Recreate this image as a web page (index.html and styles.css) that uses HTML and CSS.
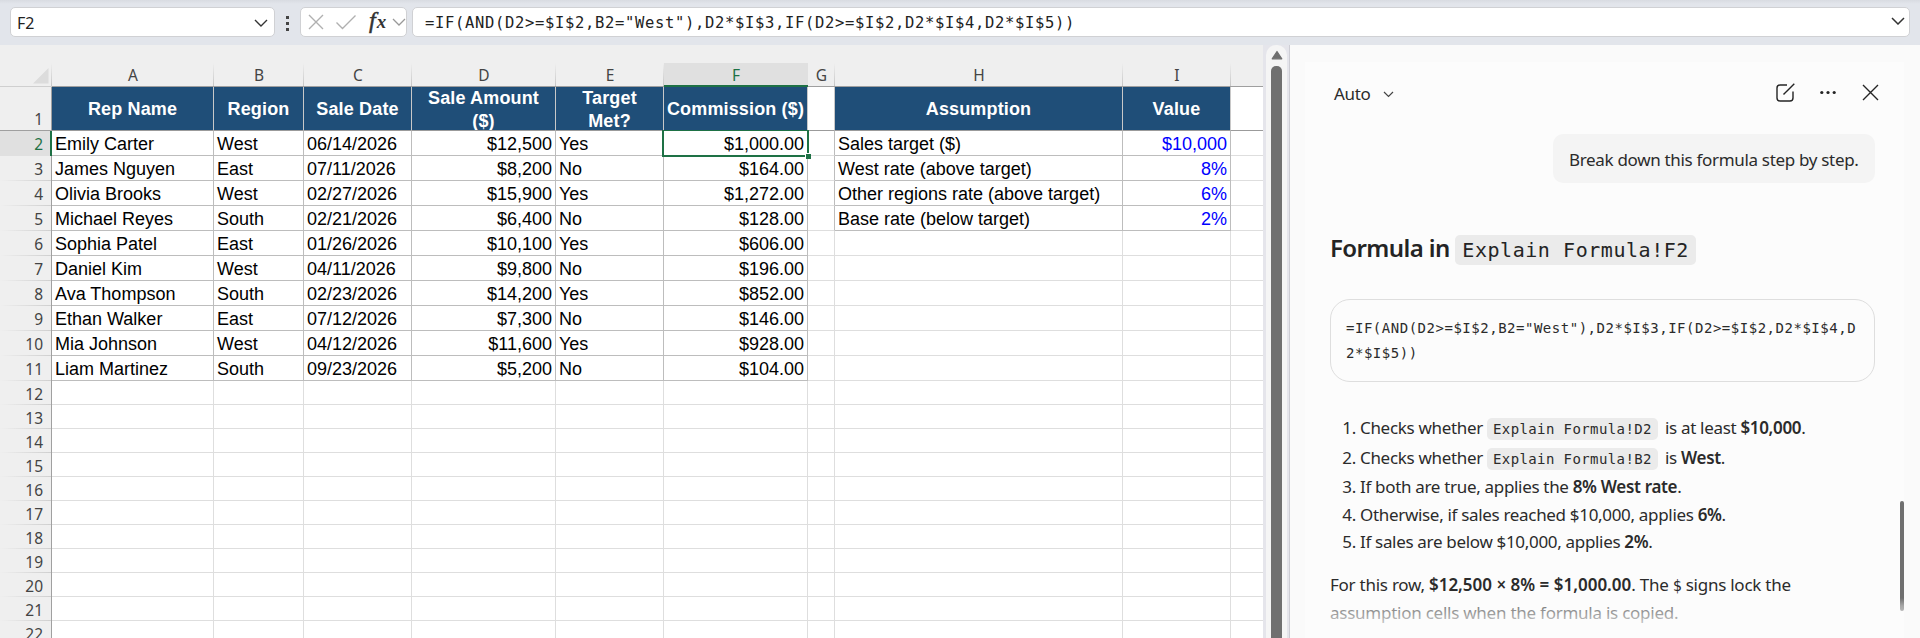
FILE: index.html
```html
<!DOCTYPE html>
<html lang="en">
<head>
  <meta charset="UTF-8">
  <meta name="viewport" content="width=device-width, initial-scale=1.0">
  <title>Explain Formula</title>
  <link rel="stylesheet" href="styles.css">
</head>
<body>

  <div class="formula-bar">
    <div class="name-box">
      <span>F2</span>
      <svg width="14" height="8" viewBox="0 0 14 8"><path d="M1 1l6 6 6-6" fill="none" stroke="#333" stroke-width="1.4"/></svg>
    </div>
    <div class="grip"><i></i><i></i><i></i></div>
    <div class="fx-box">
      <svg width="16" height="16" viewBox="0 0 16 16"><path d="M1 1l14 14M15 1L1 15" fill="none" stroke="#b0b0b0" stroke-width="1.4"/></svg>
      <svg class="check" width="22" height="16" viewBox="0 0 22 16"><path d="M1.500 8.500l6 6L20.500 1.500" fill="none" stroke="#b0b0b0" stroke-width="1.4"/></svg>
      <span class="fx">f<span>x</span></span>
      <svg class="fx-arrow" width="14" height="8" viewBox="0 0 14 8"><path d="M1 1l6 6 6-6" fill="none" stroke="#999" stroke-width="1.3"/></svg>
    </div>
    <div class="formula-input">
      <span>=IF(AND(D2&gt;=$I$2,B2="West"),D2*$I$3,IF(D2&gt;=$I$2,D2*$I$4,D2*$I$5))</span>
      <svg width="14" height="8" viewBox="0 0 14 8"><path d="M1 1l6 6 6-6" fill="none" stroke="#333" stroke-width="1.5"/></svg>
    </div>
  </div>

  <div class="main">
    <div class="sheet">
      <table>
        <colgroup>
          <col class="w-num"><col class="w-a"><col class="w-b"><col class="w-c"><col class="w-d"><col class="w-c"><col class="w-d"><col class="w-g"><col class="w-h"><col class="w-c"><col class="w-rest">
        </colgroup>
        <tr class="letters">
          <th class="corner"><svg width="16" height="16" viewBox="0 0 16 16"><path d="M15.500 0v15.500H0z" fill="#dcdcdc"/></svg></th>
          <th>A</th><th>B</th><th>C</th><th>D</th><th>E</th><th class="active">F</th><th>G</th><th>H</th><th>I</th><th></th>
        </tr>
        <tr class="titles">
          <th>1</th>
          <td class="fill"><div>Rep Name</div></td>
          <td class="fill"><div>Region</div></td>
          <td class="fill"><div>Sale Date</div></td>
          <td class="fill"><div>Sale Amount<br>($)</div></td>
          <td class="fill"><div>Target<br>Met?</div></td>
          <td class="fill"><div>Commission ($)</div></td>
          <td></td>
          <td class="fill"><div>Assumption</div></td>
          <td class="fill"><div>Value</div></td>
          <td></td>
        </tr>
        <tr class="data active-row"><th>2</th><td>Emily Carter</td><td>West</td><td>06/14/2026</td><td class="num">$12,500</td><td>Yes</td><td class="num selected">$1,000.00</td><td class="gap"></td><td>Sales target ($)</td><td class="num input">$10,000</td><td class="rest"></td></tr>
        <tr class="data"><th>3</th><td>James Nguyen</td><td>East</td><td>07/11/2026</td><td class="num">$8,200</td><td>No</td><td class="num">$164.00</td><td class="gap"></td><td>West rate (above target)</td><td class="num input">8%</td><td class="rest"></td></tr>
        <tr class="data"><th>4</th><td>Olivia Brooks</td><td>West</td><td>02/27/2026</td><td class="num">$15,900</td><td>Yes</td><td class="num">$1,272.00</td><td class="gap"></td><td>Other regions rate (above target)</td><td class="num input">6%</td><td class="rest"></td></tr>
        <tr class="data"><th>5</th><td>Michael Reyes</td><td>South</td><td>02/21/2026</td><td class="num">$6,400</td><td>No</td><td class="num">$128.00</td><td class="gap"></td><td>Base rate (below target)</td><td class="num input">2%</td><td class="rest"></td></tr>
        <tr class="data"><th>6</th><td>Sophia Patel</td><td>East</td><td>01/26/2026</td><td class="num">$10,100</td><td>Yes</td><td class="num">$606.00</td><td class="rest"></td><td class="rest"></td><td class="rest"></td><td class="rest"></td></tr>
        <tr class="data"><th>7</th><td>Daniel Kim</td><td>West</td><td>04/11/2026</td><td class="num">$9,800</td><td>No</td><td class="num">$196.00</td><td class="rest"></td><td class="rest"></td><td class="rest"></td><td class="rest"></td></tr>
        <tr class="data"><th>8</th><td>Ava Thompson</td><td>South</td><td>02/23/2026</td><td class="num">$14,200</td><td>Yes</td><td class="num">$852.00</td><td class="rest"></td><td class="rest"></td><td class="rest"></td><td class="rest"></td></tr>
        <tr class="data"><th>9</th><td>Ethan Walker</td><td>East</td><td>07/12/2026</td><td class="num">$7,300</td><td>No</td><td class="num">$146.00</td><td class="rest"></td><td class="rest"></td><td class="rest"></td><td class="rest"></td></tr>
        <tr class="data"><th>10</th><td>Mia Johnson</td><td>West</td><td>04/12/2026</td><td class="num">$11,600</td><td>Yes</td><td class="num">$928.00</td><td class="rest"></td><td class="rest"></td><td class="rest"></td><td class="rest"></td></tr>
        <tr class="data"><th>11</th><td>Liam Martinez</td><td>South</td><td>09/23/2026</td><td class="num">$5,200</td><td>No</td><td class="num">$104.00</td><td class="rest"></td><td class="rest"></td><td class="rest"></td><td class="rest"></td></tr>
        <tr><th>12</th><td></td><td></td><td></td><td></td><td></td><td></td><td></td><td></td><td></td><td></td></tr>
        <tr><th>13</th><td></td><td></td><td></td><td></td><td></td><td></td><td></td><td></td><td></td><td></td></tr>
        <tr><th>14</th><td></td><td></td><td></td><td></td><td></td><td></td><td></td><td></td><td></td><td></td></tr>
        <tr><th>15</th><td></td><td></td><td></td><td></td><td></td><td></td><td></td><td></td><td></td><td></td></tr>
        <tr><th>16</th><td></td><td></td><td></td><td></td><td></td><td></td><td></td><td></td><td></td><td></td></tr>
        <tr><th>17</th><td></td><td></td><td></td><td></td><td></td><td></td><td></td><td></td><td></td><td></td></tr>
        <tr><th>18</th><td></td><td></td><td></td><td></td><td></td><td></td><td></td><td></td><td></td><td></td></tr>
        <tr><th>19</th><td></td><td></td><td></td><td></td><td></td><td></td><td></td><td></td><td></td><td></td></tr>
        <tr><th>20</th><td></td><td></td><td></td><td></td><td></td><td></td><td></td><td></td><td></td><td></td></tr>
        <tr><th>21</th><td></td><td></td><td></td><td></td><td></td><td></td><td></td><td></td><td></td><td></td></tr>
        <tr><th>22</th><td></td><td></td><td></td><td></td><td></td><td></td><td></td><td></td><td></td><td></td></tr>
      </table>
    </div>

    <div class="scrollbar">
      <div class="track">
        <svg width="12" height="10" viewBox="0 0 12 10"><path d="M6 1.500L10.800 8.800H1.200z" fill="#6f6f6f" stroke="#6f6f6f" stroke-width="1.200" stroke-linejoin="round"/></svg>
        <div class="thumb"></div>
      </div>
    </div>

    <div class="panel">
      <div class="chat">
        <div class="chat-header">
          <span class="mode">Auto</span>
          <svg class="mode-arrow" width="11" height="7" viewBox="0 0 11 7"><path d="M1 1l4.500 4.500L10 1" fill="none" stroke="#444" stroke-width="1.200"/></svg>
          <div class="actions">
            <svg width="20" height="20" viewBox="0 0 20 20"><path d="M12 2H5a3 3 0 0 0-3 3v10a3 3 0 0 0 3 3h10a3 3 0 0 0 3-3V8.500M8.500 11.500L19.300 0.700" fill="none" stroke="#242424" stroke-width="1.400"/></svg>
            <svg width="18" height="20" viewBox="0 0 18 20"><circle cx="2.800" cy="9.500" r="1.600" fill="#242424"/><circle cx="9" cy="9.500" r="1.600" fill="#242424"/><circle cx="15.200" cy="9.500" r="1.600" fill="#242424"/></svg>
            <svg width="18" height="20" viewBox="0 0 18 20"><path d="M2 2l15 15M17 2L2 17" fill="none" stroke="#242424" stroke-width="1.400"/></svg>
          </div>
        </div>

        <div class="bubble">Break down this formula step by step.</div>

        <h2>Formula in <code>Explain Formula!F2</code></h2>

        <div class="code-block">=IF(AND(D2&gt;=$I$2,B2="West"),D2*$I$3,IF(D2&gt;=$I$2,D2*$I$4,D2*$I$5))</div>

        <ol>
          <li class="tall">Checks whether <code>Explain Formula!D2</code> is at least <b>$10,000</b>.</li>
          <li class="tall">Checks whether <code>Explain Formula!B2</code> is <b>West</b>.</li>
          <li>If both are true, applies the <b>8% West rate</b>.</li>
          <li>Otherwise, if sales reached $10,000, applies <b>6%</b>.</li>
          <li>If sales are below $10,000, applies <b>2%</b>.</li>
        </ol>

        <p>For this row, <b>$12,500 × 8% = $1,000.00</b>. The <span class="mono">$</span> signs lock the<br>assumption cells when the formula is copied.</p>

        <div class="chat-thumb"></div>
        <div class="fade"></div>
      </div>
    </div>
  </div>

</body>
</html>
```
FILE: styles.css
```css
/* Basic styling */
*,
*::before,
*::after {
  box-sizing: border-box;
}

body {
  margin: 0;
  height: 638px;
  overflow: hidden;
  display: flex;
  flex-direction: column;
  background: #e2e5eb;
  font-family: "Noto Sans", "Open Sans", sans-serif;
}

svg {
  display: block;
  flex: none;
}

/* Formula bar */
.formula-bar {
  height: 45px;
  flex: none;
  display: flex;
  padding: 7px 10px 8px;
  background: linear-gradient(#d8dbe1, #e2e5eb 4px);
}

.name-box,
.fx-box,
.formula-input {
  display: flex;
  align-items: center;
  height: 30px;
  background: #fff;
  border: 1px solid #d0d1d4;
  border-radius: 5px;
}

.name-box {
  width: 265px;
  padding: 1px 6px 0;
  justify-content: space-between;
  font-size: 16px;
  color: #222;
}

.grip {
  width: 25px;
  display: flex;
  flex-direction: column;
  align-items: center;
  gap: 3px;
  padding-top: 9px;
}

.grip i {
  width: 3px;
  height: 3px;
  background: #444;
}

.fx-box {
  width: 107px;
  padding-left: 7px;
}

.check {
  margin-left: 11px;
}

.fx {
  width: 27px;
  margin: -3px 0 0 12px;
  font-family: "Liberation Serif", serif;
  font-style: italic;
  font-size: 24px;
  line-height: 24px;
  color: #333;
  -webkit-text-stroke: 0.5px #333;
}

.fx span {
  margin-left: 1px;
  font-size: 19px;
  font-weight: bold;
  -webkit-text-stroke: 0;
}

.fx-arrow {
  margin-left: -4px;
}

.formula-input {
  width: 1498px;
  margin-left: 5px;
  padding: 2px 4px 0 12px;
  justify-content: space-between;
  font-family: "DejaVu Sans Mono", monospace;
  font-size: 15.5px;
  letter-spacing: 0.67px;
  color: #222;
}

.formula-input svg {
  margin-top: -5px;
}

.main {
  flex: 1;
  min-height: 0;
  display: flex;
}

/* Spreadsheet */
.sheet {
  width: 1263px;
  overflow: hidden;
  background: #fff;
}

table {
  width: 1263px;
  table-layout: fixed;
  border-collapse: separate;
  border-spacing: 0;
}

.w-num { width: 52px; }
.w-a { width: 162px; }
.w-b { width: 90px; }
.w-c { width: 108px; }
.w-d { width: 144px; }
.w-g { width: 27px; }
.w-h { width: 288px; }
.w-rest { width: 32px; }

th {
  height: 24px;
  padding: 1px 8px 0 0;
  font-weight: normal;
  font-size: 15.5px;
  line-height: 22px;
  text-align: right;
  color: #444;
  border-right: 1px solid #a0a0a0;
  background: linear-gradient(90deg, #efefef, #cfcfcf) bottom / 100% 1px no-repeat #efefef;
}

td {
  height: 24px;
  padding: 0;
  border-right: 1px solid #dedede;
  border-bottom: 1px solid #dedede;
}

tr > :last-child {
  border-right: none;
}

.letters th {
  height: 42px;
  padding: 19px 0 0;
  line-height: 20px;
  text-align: center;
  border-right: none;
  border-bottom: 1px solid #9f9f9f;
  background: linear-gradient(#efefef 18px, #c6c6c6) right / 1px 100% no-repeat #efefef;
}

.letters th:last-child {
  background: #efefef;
}

.letters .corner {
  padding: 20px 0 0 33px;
  border-bottom-color: #cfcfcf;
}

.letters .active {
  color: #1e7145;
  border-bottom: 2px solid #1e7145;
  background: linear-gradient(#efefef 18px, #e0e0e0 18px);
}

.titles th {
  height: 44px;
  padding-top: 21px;
  border-bottom: 1px solid #9f9f9f;
  background: #efefef;
}

.titles td {
  height: 44px;
  border-right-color: #c8c8c8;
  border-bottom-color: #9b9b9b;
}

.fill {
  background: #1f4e78;
}

.fill div {
  height: 43px;
  display: flex;
  align-items: center;
  justify-content: center;
  padding: 2px 0 0;
  text-align: center;
  overflow: hidden;
  font-family: "Liberation Sans", Arial, sans-serif;
  font-size: 18px;
  font-weight: bold;
  line-height: 23px;
  letter-spacing: 0.15px;
  white-space: nowrap;
  color: #fff;
}

.data th,
.data td {
  height: 25px;
}

.data td {
  padding: 2px 3px 0;
  font-family: "Liberation Sans", Arial, sans-serif;
  font-size: 18px;
  line-height: 22px;
  white-space: nowrap;
  color: #000;
  border-color: #bdbdbd;
}

.data .num {
  text-align: right;
}

.data .input {
  color: #0000ff;
}

.data .gap {
  border-bottom-color: #dedede;
}

.data .rest {
  border-color: #dedede;
}

.active-row th {
  color: #1e7145;
  border-right: 2px solid #1e7145;
  padding-right: 7px;
  background: #e0e0e0;
}

.selected {
  position: relative;
}

/* Selection frame and fill handle */
.selected::before {
  content: "";
  position: absolute;
  top: -1px;
  left: -2px;
  width: 147px;
  height: 27px;
  border: 2px solid #1e7145;
  border-top-width: 1px;
}

.selected::after {
  content: "";
  position: absolute;
  right: -4px;
  bottom: -4px;
  width: 6px;
  height: 6px;
  background: #1e7145;
  border: solid #fff;
  border-width: 1px 0 0 1px;
}

/* Sheet scrollbar */
.scrollbar {
  width: 27px;
  padding-left: 3px;
  background: #e5e5eb;
  border-right: 1px solid #cdcdd4;
}

.track {
  width: 21px;
  height: 100%;
  display: flex;
  flex-direction: column;
  align-items: center;
  padding-top: 5px;
  background: #f5f5f5;
  border-radius: 10px 10px 0 0;
}

.thumb {
  width: 11px;
  flex: 1;
  margin-top: 6px;
  background: #707070;
  border-radius: 5px 5px 0 0;
}

/* Chat panel */
.panel {
  flex: 1;
  padding: 17px 16px 0 15px;
  background: #fafafa;
}

.chat {
  position: relative;
  height: 100%;
  padding: 0 29px 0 25px;
  background: #fcfcfc;
  font-size: 17px;
  letter-spacing: -0.32px;
  color: #2b2b2b;
}

.chat-header {
  height: 72px;
  display: flex;
  align-items: flex-start;
  padding: 19px 0 0 4px;
}

.mode {
  line-height: 26px;
}

.mode-arrow {
  margin: 10px 0 0 12px;
}

.actions {
  display: flex;
  gap: 24px;
  margin: 2px -4px 0 auto;
}

.bubble {
  width: 322px;
  height: 49px;
  margin-left: auto;
  padding: 0 16px;
  border-radius: 10px;
  line-height: 51px;
  white-space: nowrap;
  background: #f4f4f4;
}

code,
.mono {
  font-family: "DejaVu Sans Mono", monospace;
}

code {
  background: #ebebeb;
  border-radius: 5px;
}

h2 {
  height: 36px;
  margin: 47px 0 0;
  font-size: 24px;
  line-height: 36px;
  letter-spacing: -0.6px;
  font-weight: 600;
  color: #242424;
}

h2 code {
  padding: 3px 7px;
  font-size: 20px;
  font-weight: normal;
  letter-spacing: 0.55px;
}

.code-block {
  height: 83px;
  margin-top: 33px;
  padding: 16px 15px;
  border: 1px solid #dedede;
  border-radius: 20px;
  font-family: "DejaVu Sans Mono", monospace;
  font-size: 14px;
  letter-spacing: 0.52px;
  line-height: 25px;
  word-break: break-all;
}

ol {
  margin: 31px 0 0;
  padding-left: 30px;
}

li {
  height: 27.5px;
  line-height: 27.5px;
  white-space: nowrap;
}

.tall {
  height: 30px;
  line-height: 30px;
}

li code {
  margin-right: 3px;
  padding: 3px 6px;
  font-size: 14px;
  line-height: 20px;
  letter-spacing: 0.4px;
}

b {
  font-weight: 600;
}

p {
  margin: 15px 0 0;
  line-height: 28px;
  letter-spacing: -0.25px;
  white-space: nowrap;
}

p b {
  letter-spacing: 0;
}

.mono {
  font-size: 15px;
  line-height: 20px;
}

.chat-thumb {
  position: absolute;
  right: 0;
  top: 439px;
  width: 4px;
  height: 110px;
  border-radius: 2px;
  background: #6f6f6f;
}

.fade {
  position: absolute;
  left: 0;
  right: 0;
  bottom: 0;
  height: 40px;
  background: linear-gradient(rgba(252, 252, 252, 0), rgba(252, 252, 252, 0.4) 8px, rgba(252, 252, 252, 0.75) 26px, #fcfcfc 34px);
}
```
